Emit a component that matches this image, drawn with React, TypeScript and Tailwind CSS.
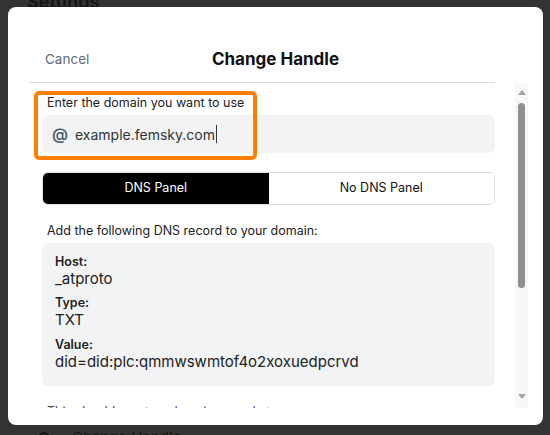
import React from "react";

export default function App() {
  return (
    <div
      className="relative w-[550px] h-[435px] overflow-hidden bg-[#333333]"
      style={{ fontFamily: "Inter, 'Noto Sans', sans-serif" }}
    >
      {/* page underneath */}
      <div className="absolute left-[27px] top-[-12px] text-[18px] font-bold text-[#161616]">Settings</div>
      <div className="absolute left-[38px] top-[427px] flex items-center gap-[22px] text-[15px] text-[#161616]">
        <span className="block w-[12px] h-[12px] rounded-full border-2 border-[#161616]"></span>
        <span>Change Handle</span>
      </div>

      {/* modal */}
      <div className="absolute left-[8px] top-[7px] w-[535px] h-[418px] bg-white rounded-[8px] flex flex-col">
        <div className="grid grid-cols-3 items-center h-[75px] pt-[30px] shrink-0">
          <div className="pl-[37px] text-[13.5px] text-[#5d6c7b]">Cancel</div>
          <div className="text-center text-[17px] font-bold text-[#111]">Change Handle</div>
          <div></div>
        </div>
        <div className="ml-[21px] w-[466px] h-px bg-[#d7dee5] shrink-0"></div>

        <div className="relative flex h-[325px] shrink-0">
          <div className="ml-[34px] w-[453px] h-full overflow-hidden">
            <div className="pt-[11px] pl-[5px] text-[12.5px] leading-[18px] text-[#222]">
              Enter the domain you want to use
            </div>
            <div className="mt-[3px] h-[38px] rounded-[6px] bg-[#f1f3f5] flex items-center pl-[10px]">
              <span className="text-[16px] font-semibold text-[#4a5a6b] leading-none">@</span>
              <span className="ml-[7px] text-[14px] text-[#333]">example.femsky.com</span>
              <span className="ml-[1px] w-px h-[18px] bg-[#333]"></span>
            </div>

            <div className="mt-[19px] h-[33px] flex rounded-[6px] border border-[#d9dde2] overflow-hidden text-[12.5px]">
              <div className="w-1/2 bg-black text-white flex items-center justify-center">DNS Panel</div>
              <div className="w-1/2 bg-white text-[#111] flex items-center justify-center">No DNS Panel</div>
            </div>

            <div className="mt-[17px] pl-[5px] text-[12.5px] leading-[18px] text-[#222]">
              Add the following DNS record to your domain:
            </div>
            <div className="mt-[3px] h-[143px] rounded-[6px] bg-[#f1f3f5] px-[13px] pt-[11px] text-[#222]">
              <div className="text-[12.5px] leading-[16px] font-semibold">Host:</div>
              <div className="text-[15px] leading-[18px]">_atproto</div>
              <div className="mt-[7px] text-[12.5px] leading-[16px] font-semibold">Type:</div>
              <div className="text-[15px] leading-[18px]">TXT</div>
              <div className="mt-[8px] text-[12.5px] leading-[16px] font-semibold">Value:</div>
              <div className="text-[15px] leading-[18px]">did=did:plc:qmmwswmtof4o2xoxuedpcrvd</div>
            </div>
            <div className="mt-[17px] pl-[5px] text-[12.5px] leading-[18px] text-[#444] whitespace-nowrap">
              This should create a domain record at:
            </div>
          </div>

          {/* scrollbar */}
          <div className="ml-[20px] w-[13px] h-full bg-[#f8f8f8] flex flex-col items-center">
            <div className="mt-[7px] w-0 h-0 border-l-[4px] border-r-[4px] border-b-[5px] border-l-transparent border-r-transparent border-b-[#a3a3a3]"></div>
            <div className="mt-[8px] w-[7px] h-[185px] rounded-full bg-[#8f8f8f]"></div>
            <div className="mt-auto mb-[9px] w-0 h-0 border-l-[4px] border-r-[4px] border-t-[5px] border-l-transparent border-r-transparent border-t-[#a3a3a3]"></div>
          </div>

          {/* orange highlight */}
          <div className="absolute left-[26px] top-[8px] w-[223px] h-[69px] rounded-[5px] border-[4px] border-[#ff8000]"></div>
        </div>
      </div>
    </div>
  );
}
